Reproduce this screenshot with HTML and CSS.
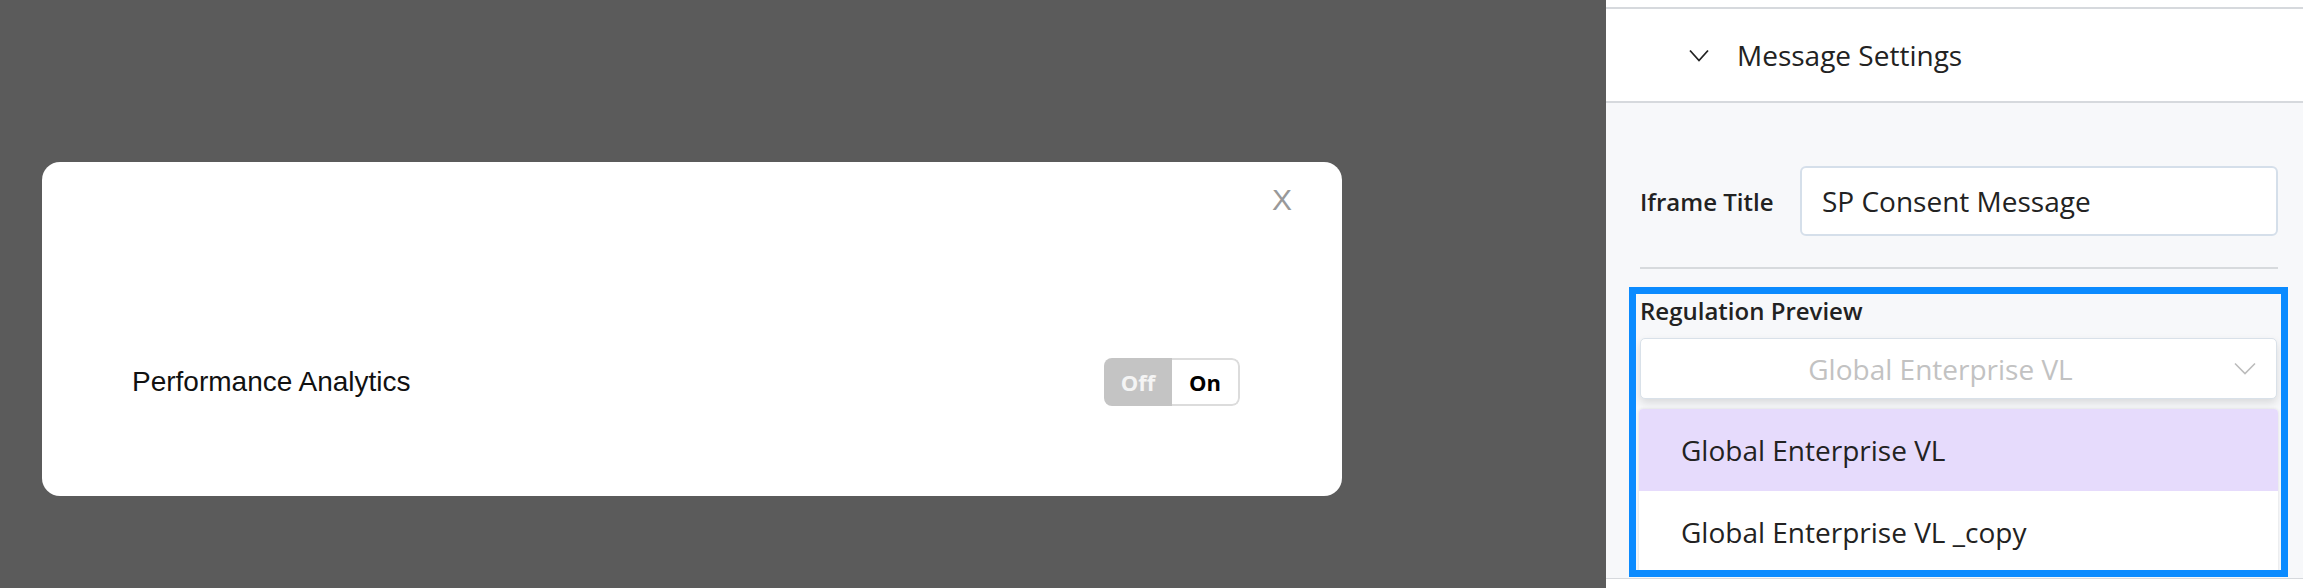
FILE: index.html
```html
<!DOCTYPE html>
<html lang="en">
<head>
    <meta charset="UTF-8">
    <meta name="viewport" content="width=device-width, initial-scale=1.0">
    <title>Message Preview</title>
    <link rel="stylesheet" href="styles.css">
</head>
<body>
    <div class="stage">
        <div class="modal">
            <div class="modal-head">
                <span class="close">X</span>
            </div>
            <div class="consent-row">
                <span class="consent-label">Performance Analytics</span>
                <div class="toggle">
                    <span class="toggle-off">Off</span>
                    <span class="toggle-on">On</span>
                </div>
            </div>
        </div>
    </div>
    <aside class="panel">
        <div class="panel-top"></div>
        <div class="section-head">
            <svg class="chevron" width="20" height="13" viewBox="0 0 20 13">
                <polyline points="1,1.5 10,11.5 19,1.5" fill="none" stroke="#222" stroke-width="1.8"/>
            </svg>
            <span class="section-title">Message Settings</span>
        </div>
        <div class="section-body">
            <div class="field-row">
                <label class="field-label">Iframe Title</label>
                <div class="text-input">SP Consent Message</div>
            </div>
            <div class="divider"></div>
            <div class="preview-box">
                <div class="preview-label">Regulation Preview</div>
                <div class="select">
                    <span class="select-value">Global Enterprise VL</span>
                    <svg class="select-arrow" width="22" height="13" viewBox="0 0 22 13">
                        <polyline points="1,1.5 11,11.5 21,1.5" fill="none" stroke="#bcbcbc" stroke-width="1.6"/>
                    </svg>
                </div>
                <ul class="options">
                    <li class="option active">Global Enterprise VL</li>
                    <li class="option">Global Enterprise VL _copy</li>
                </ul>
            </div>
        </div>
        <div class="panel-foot"></div>
    </aside>
</body>
</html>
```
FILE: styles.css
```css
* {
    margin: 0;
    padding: 0;
    box-sizing: border-box;
}

body {
    font-family: "Open Sans", sans-serif;
    background-color: #5b5b5b;
    height: 100vh;
    display: flex;
    overflow: hidden;
}

.stage {
    flex: 1;
    padding: 162px 0 0 42px;
}

.modal {
    width: 1300px;
    height: 334px;
    background: #fff;
    border-radius: 18px;
}

.modal-head {
    display: flex;
    justify-content: flex-end;
    padding: 23px 50px 0 0;
}

.close {
    font-family: "Liberation Sans", Arial, sans-serif;
    font-size: 30px;
    line-height: 30px;
    color: #999;
    cursor: pointer;
}

.consent-row {
    display: flex;
    align-items: center;
    justify-content: space-between;
    margin-top: 143px;
    padding: 0 102px 0 90px;
}

.consent-label {
    font-family: "Liberation Sans", Arial, sans-serif;
    font-size: 28px;
    color: #111;
}

.toggle {
    display: flex;
    width: 136px;
    height: 48px;
    border-radius: 8px;
    overflow: hidden;
    font-size: 22px;
    font-weight: 700;
}

.toggle-off {
    width: 68px;
    background: #c4c4c4;
    color: #f4f4f4;
    display: flex;
    align-items: center;
    justify-content: center;
}

.toggle-on {
    flex: 1;
    border: 2px solid #dcdcdc;
    border-left: none;
    border-radius: 0 8px 8px 0;
    color: #000;
    display: flex;
    align-items: center;
    justify-content: center;
}

.panel {
    width: 697px;
    background: #f7f8fa;
    display: flex;
    flex-direction: column;
}

.panel-top {
    height: 9px;
    background: #fff;
    border-bottom: 2px solid #d6d9dd;
}

.section-head {
    height: 94px;
    background: #fff;
    border-bottom: 2px solid #d6d9dd;
    display: flex;
    align-items: center;
    gap: 28px;
    padding-left: 83px;
}

.section-title {
    font-size: 28px;
    color: #222;
}

.section-body {
    padding: 63px 25px 1px 34px;
}

.field-row {
    display: flex;
    align-items: center;
    height: 70px;
}

.field-label {
    width: 160px;
    font-size: 24px;
    font-weight: 600;
    color: #222;
}

.text-input {
    flex: 1;
    height: 70px;
    background: #fff;
    border: 2px solid #d5dfea;
    border-radius: 6px;
    padding-left: 20px;
    display: flex;
    align-items: center;
    font-size: 28px;
    color: #222;
}

.divider {
    height: 2px;
    background: #d7dadd;
    margin-top: 31px;
}

.preview-box {
    height: 290px;
    margin: 18px -10px 0 -11px;
    border: 7px solid #0b8bff;
    padding: 0 4px;
    overflow: hidden;
}

.preview-label {
    font-size: 24px;
    font-weight: 600;
    color: #222;
    line-height: 33px;
}

.select {
    margin-top: 11px;
    height: 61px;
    background: #fff;
    border: 1px solid #d9e1e9;
    border-radius: 5px;
    box-shadow: 0 4px 9px rgba(0, 0, 0, 0.12);
    display: flex;
    align-items: center;
    padding: 0 20px 0 6px;
}

.select-value {
    flex: 1;
    text-align: center;
    font-size: 28px;
    color: #c2c2c2;
}

.options {
    list-style: none;
    margin: 10px -1px 0;
    background: #fff;
    border-radius: 4px 4px 0 0;
    box-shadow: 0 0 3px rgba(0, 0, 0, 0.12);
}

.option {
    height: 82px;
    display: flex;
    align-items: center;
    padding-left: 42px;
    font-size: 28px;
    color: #222;
}

.option.active {
    background: #e6dbfc;
    border-radius: 4px 4px 0 0;
}

.panel-foot {
    flex: 1;
    background: #fff;
    border-top: 1px solid #d6d9dd;
}
```
